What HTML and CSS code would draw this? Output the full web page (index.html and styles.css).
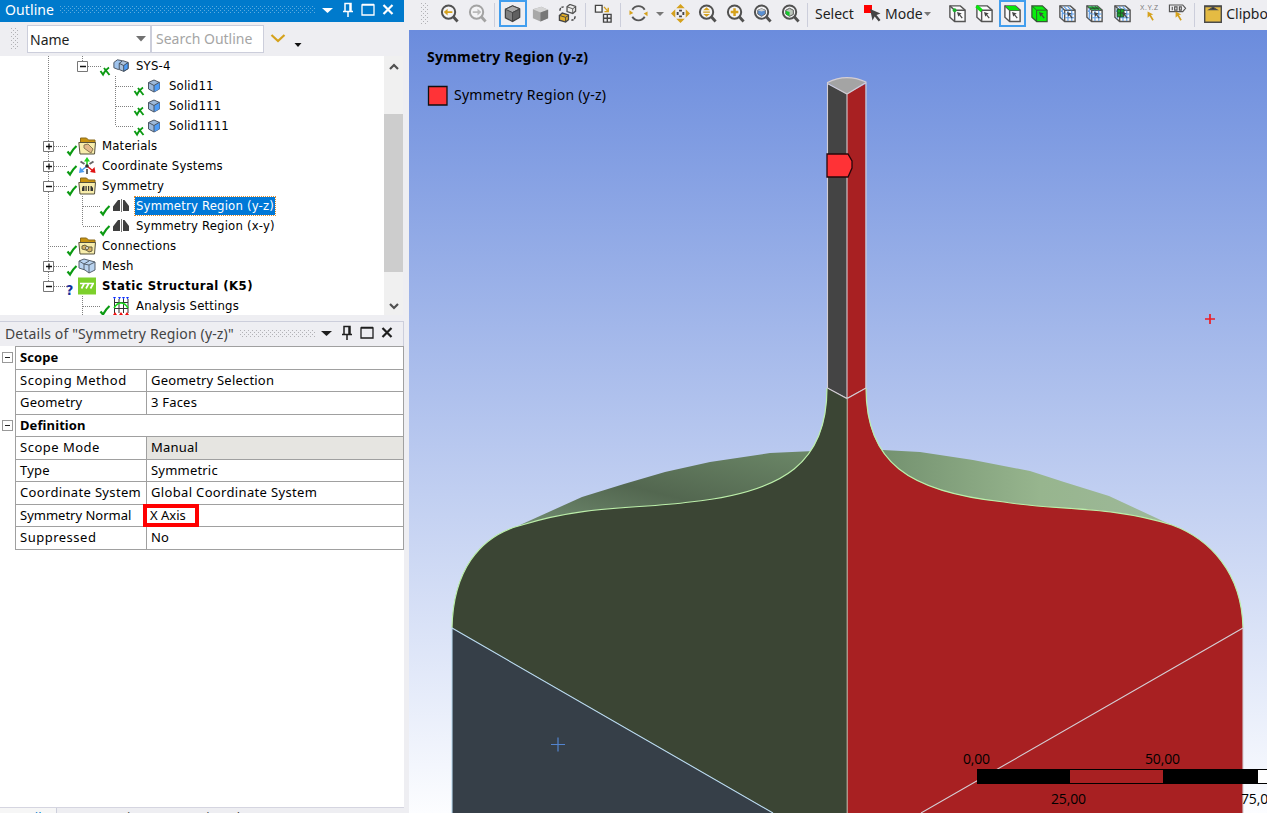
FILE: index.html
```html
<!DOCTYPE html>
<html lang="en">
<head>
<meta charset="utf-8">
<title>Outline</title>
<link rel="stylesheet" href="styles.css">
</head>
<body>
<svg class="defs" width="0" height="0">
  <defs>
    <pattern id="grip" width="4" height="4" patternUnits="userSpaceOnUse"><path d="M0 0h1v1H0zM2 2h1v1H2z" fill="#b2b2b6"/></pattern>
    <pattern id="grip-active" width="4" height="4" patternUnits="userSpaceOnUse"><path d="M0 0h1v1H0zM2 2h1v1H2z" fill="#5cabdf"/></pattern>
    <symbol id="check" viewBox="0 0 12 14"><path d="M1.500 8.500L4 11.500Q6.500 6.500 10.500 3" fill="none" stroke="#0b9a12" stroke-width="2.200"/></symbol>
    <symbol id="checkx" viewBox="0 0 12 14"><path d="M1.500 8L4 11.500Q6 7 10 4.500M5 5l5.500 7" fill="none" stroke="#0b9a12" stroke-width="1.900"/></symbol>
    <symbol id="cube" viewBox="0 0 14 16"><path d="M1.500 4.500L7 2l5.500 2.500v6.500L7 14l-5.500-3z" fill="#9db9da" stroke="#4a5564"/><path d="M7 7.500l5.500-3v6.500L7 14z" fill="#4f9cf5"/><path d="M1.500 4.500L7 7.500l5.500-3.300M7 7.500v6.500" fill="none" stroke="#4a5564"/></symbol>
    <symbol id="folder" viewBox="0 0 18 18"><path d="M2.500 6V1h6l2 2h6.500V6" fill="#c9930e" stroke="#8a6a1c"/><path d="M.8 5.500h16.700L16.500 17h-14.500z" fill="#f8edab" stroke="#57523c"/></symbol>
    <symbol id="mirror" viewBox="0 0 18 16"><path d="M1 13V8.500l5-6.500H8v11zM11 13V2h1.500l4.500 6v5z" fill="#3f3f3f"/><path d="M9.500 1v13" stroke="#777" stroke-width="1"/></symbol>
    <symbol id="lens" viewBox="0 0 20 20"><circle cx="9" cy="8.500" r="7" fill="#f4f4f6" stroke="currentColor" stroke-width="2.100"/><path d="M14 13.500l4.500 5" stroke="currentColor" stroke-width="3"/></symbol>
    <symbol id="box" viewBox="0 0 20 20"><path d="M2 2h11l5 4.500v12H7L2 14z" fill="#fbfbfc" stroke="#555" stroke-width="1.500"/><path d="M2 2L7 6.500h11M7 6.500v12" fill="none" stroke="#555" stroke-width="1.500"/></symbol>
    <symbol id="arrow" viewBox="0 0 20 20"><path d="M9.500 8.500l5 1.500-1.800 1 2.800 3.500-1 .8-2.700-3.500-1 1.700z" fill="#444"/></symbol>
    <symbol id="meshbox" viewBox="0 0 20 20"><use href="#box"/><path d="M10.500 7v11M14.500 7v11M7.500 10.500h10M7.500 14.500h10M6 2.500l4 4M10 2.500l4 4M3 7l4 4M4.500 4.500v11" stroke="#5a9be6" stroke-width="1.200"/></symbol>
  </defs>
</svg>
<div class="app">
  <aside class="left">
    <header class="title title-active">
      <span class="title-text">Outline</span>
      <svg class="title-grip" height="7"><rect width="100%" height="7" fill="url(#grip-active)"/></svg>
      <svg class="title-actions" width="78" height="18" viewBox="0 0 78 18"><path d="M3 7h11L8.500 12z" fill="currentColor"/><path d="M26 2.500h6v8h-6zM24 10.500h10M29 11v5M31 3v7" fill="none" stroke="currentColor" stroke-width="1.500"/><path d="M43 4h12v10H43zM43 3.500h12" fill="none" stroke="currentColor" stroke-width="1.300"/><path d="M64.500 4l9 9M73.500 4l-9 9" stroke="currentColor" stroke-width="2.200"/></svg>
    </header>
    <div class="filterbar">
      <svg class="filter-grip" width="7" height="22"><rect width="7" height="22" fill="url(#grip)"/></svg>
      <div class="select"><span>Name</span><svg width="10" height="6"><path d="M0 0h10L5 5.500z" fill="#717171"/></svg></div>
      <div class="search">Search Outline</div>
      <svg class="filter-more" width="34" height="20"><path d="M1.500 3l6.500 6 6.500-6" fill="none" stroke="#d5a21c" stroke-width="2.200"/><path d="M24.500 11h7L28 15z" fill="#111"/></svg>
    </div>
    <div class="treewrap">
      <div class="tree">
        <svg class="guides" width="140" height="259" viewBox="0 56 140 259">
          <g fill="none" stroke="#808080" stroke-dasharray="1 1"><path d="M48.500 56v230M82.500 56v6M54 146.500h13M54 166.500h13M54 186.500h13M48 246.500h19M54 266.500h13M54 286.500h13M88 66.500h13M115.500 76v50M116 86.500h18M116 106.500h18M116 126.500h18M82.500 196v30M83 206.500h17M83 226.500h17M82.500 296v19M83 306.500h17"/></g>
          <g fill="#fff" stroke="#777"><path d="M77.500 61.500h10v10h-10zM43.500 141.500h10v10h-10zM43.500 161.500h10v10h-10zM43.500 181.500h10v10h-10zM43.500 261.500h10v10h-10zM43.500 281.500h10v10h-10z"/></g>
          <path d="M80 66.500h6M46 146.500h6M49 143.500v6M46 166.500h6M49 163.500v6M46 186.500h6M46 266.500h6M49 263.500v6M46 286.500h6" stroke="#111" stroke-width="1.300"/>
        </svg>
        <div class="row l2"><svg class="st"><use href="#checkx"/></svg><svg class="ic" viewBox="0 0 18 18"><g stroke="#3c4654"><path d="M1 5l4-3 5 1v7l-4 3-5-2z" fill="#9fc3ec"/><path d="M7 6l4-3 6 2v7l-5 3-5-2z" fill="#a9c0da"/><path d="M12 8.500l5-3.500v7l-5 3z" fill="#4f9cf5"/><path d="M7 6l5 2.500" /></g></svg><span class="sys">SYS-4</span></div>
        <div class="row l3"><svg class="st"><use href="#checkx"/></svg><svg class="ic cube"><use href="#cube"/></svg><span>Solid11</span></div>
        <div class="row l3"><svg class="st"><use href="#checkx"/></svg><svg class="ic cube"><use href="#cube"/></svg><span>Solid111</span></div>
        <div class="row l3"><svg class="st"><use href="#checkx"/></svg><svg class="ic cube"><use href="#cube"/></svg><span>Solid1111</span></div>
        <div class="row l1"><svg class="st"><use href="#check"/></svg><svg class="ic" viewBox="0 0 18 18"><use href="#folder"/><path d="M6 8l4-1 5 5-2 4-3-2-4-3z" fill="#e2b98a" stroke="#8a7850"/></svg><span>Materials</span></div>
        <div class="row l1"><svg class="st"><use href="#check"/></svg><svg class="ic" viewBox="0 0 18 18"><path d="M9 9V2" stroke="#22d422" stroke-width="1.500"/><path d="M9 9l-6 5" stroke="#4b9cf0" stroke-width="1.500"/><path d="M9 9l6 5" stroke="#e01414" stroke-width="1.500"/><path d="M9 0l3 4.500H6z" fill="#22d422"/><path d="M1 16l1-6 4.500 5z" fill="#4b9cf0"/><path d="M17.500 16l-1-6-4.500 5z" fill="#e01414"/><path d="M2.500 4.500l4 2.500M15.500 4.500l-4 2.500M9 12v5" stroke="#666" stroke-width="2"/><circle cx="9" cy="9" r="1.800" fill="#333"/></svg><span>Coordinate Systems</span></div>
        <div class="row l1"><svg class="st"><use href="#check"/></svg><svg class="ic" viewBox="0 0 18 18"><use href="#folder"/><path d="M4 14v-3l1-2h1.500v5zM7.500 9h1.200v5H7.500zM10 14V9h1.200v5zM12.500 14V9h1l1.500 2v3z" fill="#333"/></svg><span>Symmetry</span></div>
        <div class="row l2"><svg class="st"><use href="#check"/></svg><svg class="ic"><use href="#mirror"/></svg><span class="selected">Symmetry Region (y-z)</span></div>
        <div class="row l2"><svg class="st"><use href="#check"/></svg><svg class="ic"><use href="#mirror"/></svg><span>Symmetry Region (x-y)</span></div>
        <div class="row l1"><svg class="st"><use href="#check"/></svg><svg class="ic" viewBox="0 0 18 18"><use href="#folder"/><path d="M4 9l3-1 3 2 4 0v4l-3 1-3-2-4-1z" fill="#d6b262" stroke="#665f42"/><circle cx="9" cy="11" r="1.500" fill="#fff" stroke="#665f42"/></svg><span>Connections</span></div>
        <div class="row l1"><svg class="st"><use href="#check"/></svg><svg class="ic" viewBox="0 0 18 18"><path d="M1 4l5-2 11 3v8l-6 3-4-3-6-2z" fill="#b9d3f0" stroke="#56616e"/><path d="M1 4l5 3 5 1 6-3M11 8v8M6 7v6M6 7l5-3" fill="none" stroke="#56616e"/></svg><span>Mesh</span></div>
        <div class="row l1"><b class="question">?</b><svg class="ic" viewBox="0 0 18 18"><path d="M0 .5h18v17H0z" fill="#7dd02c"/><path d="M2 6.500h14M6 7l-2.500 4.500M10.500 7L8 11.500M15 7l-2.500 4.500" stroke="#fff" stroke-width="1.700"/></svg><span class="strong">Static Structural (K5)</span></div>
        <div class="row l2"><svg class="st"><use href="#check"/></svg><svg class="ic tall" viewBox="0 0 18 18"><path d="M2.500 2v14M7 2v14M11.500 2v14M16 2v14M2 5.500h14M2 11.500h14" stroke="#333"/><path d="M1 0h3L2.500 2.500zM6 0h3L7.500 2.500zM10 0h3l-1.500 2.500zM14 0h3l-1.500 2.500z" fill="#13f"/><path d="M2 11q3-5 7-5t7 5" fill="none" stroke="#1bd91b" stroke-width="1.600"/><path d="M1 18l2-3 2 3zM7 18l2-3 2 3zM13 18l2-3 2 3z" fill="#e11"/></svg><span>Analysis Settings</span></div>
      </div>
      <div class="scroll"><svg width="10" height="8"><path d="M1 6l4-4 4 4" fill="none" stroke="#505050" stroke-width="2.200"/></svg><div class="thumb"></div><svg width="10" height="8"><path d="M1 2l4 4 4-4" fill="none" stroke="#505050" stroke-width="2.200"/></svg></div>
    </div>
    <header class="title title-details">
      <span class="title-text">Details of "Symmetry Region (y-z)"</span>
      <svg class="title-grip" height="7"><rect width="100%" height="7" fill="url(#grip)"/></svg>
      <svg class="title-actions" width="78" height="18" viewBox="0 0 78 18"><path d="M3 7h11L8.500 12z" fill="currentColor"/><path d="M26 2.500h6v8h-6zM24 10.500h10M29 11v5M31 3v7" fill="none" stroke="currentColor" stroke-width="1.500"/><path d="M43 4h12v10H43zM43 3.500h12" fill="none" stroke="currentColor" stroke-width="1.300"/><path d="M64.500 4l9 9M73.500 4l-9 9" stroke="currentColor" stroke-width="2.200"/></svg>
    </header>
    <section class="details">
      <div class="gutter"><i class="minus"></i><i class="minus"></i></div>
      <div class="props">
        <div class="prop group">Scope</div>
        <div class="prop"><span class="wide">Scoping Method</span><span>Geometry Selection</span></div>
        <div class="prop"><span>Geometry</span><span>3 Faces</span></div>
        <div class="prop group">Definition</div>
        <div class="prop"><span class="wide">Scope Mode</span><span class="readonly">Manual</span></div>
        <div class="prop"><span>Type</span><span>Symmetric</span></div>
        <div class="prop"><span class="medium">Coordinate System</span><span class="medium">Global Coordinate System</span></div>
        <div class="prop"><span class="narrow">Symmetry Normal</span><span class="marked">X Axis</span></div>
        <div class="prop"><span class="wide">Suppressed</span><span>No</span></div>
      </div>
    </section>
    <nav class="tabs"><span class="tab current">Details</span><span class="tab">Manage Views</span><span class="tab">Section Planes</span></nav>
  </aside>
  <main class="right">
    <div class="toolbar">
      <svg class="bar-grip" width="7" height="22"><rect width="7" height="22" fill="url(#grip)"/></svg>
      <div class="group-tools">
        <span class="tool"><svg viewBox="0 0 20 20"><use href="#lens"/><path d="M4 8.500l4-3.500v2.500h5v2H8V12z" fill="#d5a11d"/></svg></span>
        <span class="tool dim"><svg viewBox="0 0 20 20"><use href="#lens"/><path d="M14 8.500l-4-3.500v2.500H5v2h5V12z" fill="#bbb"/></svg></span>
      </div><i class="sep"></i>
      <div class="group-tools">
        <span class="tool on"><svg viewBox="0 0 20 20"><path d="M2.500 5.500L10 2l7.500 3v9L10 18.500l-7.500-4z" fill="#808080" stroke="#444" stroke-width="1.300"/><path d="M2.500 5.500L10 2l7.500 3-7.500 4z" fill="#aaa" stroke="#444"/><path d="M10 9v9l7.500-4V5.500z" fill="#606060" stroke="#444"/></svg></span>
        <span class="tool"><svg viewBox="0 0 20 20"><path d="M2 5.500L11 3l7 3v9l-8 3.500L2 15z" fill="#a8a8a8"/><path d="M2 5.500L11 3l7 3-8 3z" fill="#d4d4d4"/><path d="M10 9l8-3v9l-8 3.500z" fill="#777"/></svg></span>
        <span class="tool"><svg viewBox="0 0 20 20"><path d="M9.500 3l3-2.500 6 2v5l-3 2.500-6-2z" fill="#eee" stroke="#555" stroke-width="1.400"/><path d="M9.500 3l6 2 3-2M15.500 5v5" stroke="#555" fill="none"/><path d="M1.500 12L4.500 9.500l6.500 2v5l-3 2.500-6.500-2z" fill="#e2ae28" stroke="#444" stroke-width="1.400"/><path d="M1.500 12l6.500 2 3-2M8 14v5" stroke="#444" fill="none"/><path d="M2 7q0-4 4-4M18 13q0 4-4 4" fill="none" stroke="#444" stroke-width="1.500" stroke-dasharray="3 1"/></svg></span>
      </div><i class="sep"></i>
      <div class="group-tools"><span class="tool"><svg viewBox="0 0 20 20"><path d="M1.500 1.500h7v7h-7z" fill="#f8f8f8" stroke="#444" stroke-width="1.400"/><path d="M10 11h8v8h-8zM14 11v8M10 15h8" fill="none" stroke="#444" stroke-width="1.400"/><path d="M10.500 3l4 4.500M15 4v4h-4" fill="none" stroke="#d5a11d" stroke-width="1.500"/></svg></span></div><i class="sep"></i>
      <div class="group-tools">
        <span class="tool"><svg viewBox="0 0 20 20"><path d="M3.500 6A7.500 7.500 0 0 1 16.500 6M16.500 13.500A7.500 7.500 0 0 1 3.500 13.500" fill="none" stroke="#555" stroke-width="2"/><path d="M.5 6.500v5l4-2zM19.500 13V8l-4 2z" fill="#d5a11d"/></svg></span>
        <svg class="caret" width="14" height="6"><path d="M3 1h8L7 5z" fill="#777"/></svg>
        <span class="tool"><svg viewBox="0 0 20 20"><path d="M10 0l4.500 4.500h-9zM10 20l4.500-4.500h-9zM0 10l4.500-4.500v9zM20 10l-4.500-4.500v9z" fill="#d5a11d"/><path d="M8.500 7h3M8.500 13h3M7 8.500v3M13 8.500v3" stroke="#444" stroke-width="2"/></svg></span>
        <span class="tool"><svg viewBox="0 0 20 20"><use href="#lens"/><path d="M9 3.500l3.500 3h-7zM9 13.500l3.500-3h-7zM5.500 8h7v1.300h-7z" fill="#d5a11d"/></svg></span>
        <span class="tool"><svg viewBox="0 0 20 20"><use href="#lens"/><path d="M9 4.500v8M5 8.500h8" stroke="#d5a11d" stroke-width="2.600"/></svg></span>
        <span class="tool"><svg viewBox="0 0 20 20"><use href="#lens"/><path d="M5 6.500L9 5l4 1.500v4L9 13l-4-2.500z" fill="#5b90d2" stroke="#666"/><path d="M5 6.500L9 5l4 1.500-4 1.500z" fill="#ccc"/></svg></span>
        <span class="tool"><svg viewBox="0 0 20 20"><use href="#lens"/><path d="M5 6.500L9 4.500l4 2v4.500L9 13l-4-2.500z" fill="#bcc6bc" stroke="#555"/><path d="M5 7l4 1.500V13l-4-2.500z" fill="#16c72c"/></svg></span>
      </div><i class="sep"></i>
      <span class="label select-label">Select</span>
      <svg class="mode-icon" width="18" height="18"><path d="M0 0h8v8H0z" fill="red"/><path d="M6 4l10.500 4.500-4 1.500 4 5-1.800 1.500-4-5-2.200 4z" fill="#444"/></svg>
      <span class="label">Mode</span>
      <svg class="caret mode-caret" width="9" height="6"><path d="M1 1h7L4.500 5z" fill="#777"/></svg>
      <div class="group-tools pickers">
        <span class="tool"><svg viewBox="0 0 20 20"><use href="#box"/><use href="#arrow"/><circle cx="7" cy="6.500" r="2" fill="#19b32a"/></svg></span>
        <span class="tool"><svg viewBox="0 0 20 20"><use href="#box"/><path d="M1.500 2l5.500 5" stroke="#08e60d" stroke-width="3.500"/><use href="#arrow"/></svg></span>
        <span class="tool on"><svg viewBox="0 0 20 20"><use href="#box"/><path d="M2.500 2.200H13L17.500 6.500H7z" fill="#08e60d"/><use href="#arrow"/></svg></span>
        <span class="tool"><svg viewBox="0 0 20 20"><path d="M2 2h11l5 4.500v12H7L2 14z" fill="#08f00d" stroke="#355835" stroke-width="1.300"/><path d="M2 2l5 4.500h11M7 6.500v12" fill="none" stroke="#355835"/><use href="#arrow"/></svg></span>
        <span class="tool"><svg viewBox="0 0 20 20"><use href="#meshbox"/><use href="#arrow"/></svg></span>
        <span class="tool"><svg viewBox="0 0 20 20"><use href="#meshbox"/><path d="M3 2.500h10l4 3.500H7z" fill="#16b72c"/><path d="M7 2.500l4 3.500M10.500 2.500l4 3.500M5 4.500h10" stroke="#333" stroke-width=".8"/><use href="#arrow"/></svg></span>
        <span class="tool"><svg viewBox="0 0 20 20"><use href="#meshbox"/><path d="M4.500 5.500h7v8h-7z" fill="#19a22b" stroke="#234f28"/><path d="M5 9.500h7M8 6v8" stroke="#234f28"/><use href="#arrow"/></svg></span>
        <span class="tool"><svg viewBox="0 0 20 20"><text x="0" y="6" font-size="7" textLength="19" class="xyz">X.Y.Z</text><path d="M8 8l6 3-2.500.5 3 5-1.500 1-3-5-2 2z" fill="#d5a11d"/></svg></span>
        <span class="tool"><svg viewBox="0 0 20 20"><path d="M1.500 1h14l3 3.500-3 3.500H1.500zM4.500 3v3.500M7 3h2.500v3.500H7zM12 3h2v3.500h-2z" fill="none" stroke="#555" stroke-width="1.200"/><path d="M8 8l6 3-2.500.5 3 5-1.500 1-3-5-2 2z" fill="#d5a11d"/></svg></span>
      </div><i class="sep"></i>
      <svg class="clip-icon" width="18" height="18"><path d="M.7 1h16.600v16.300H.7z" fill="#e5bb43" stroke="#4b4b4b" stroke-width="1.400"/><path d="M1 1.500h16M5.500 4.500L9 2.500l3.500 2z" stroke="#4b4b4b" stroke-width="1.300"/></svg>
      <span class="label">Clipboard</span>
    </div>
    <svg class="scene" width="858" height="783" viewBox="409 30 858 783">
      <defs>
        <linearGradient id="sky" x1="0" y1="0" x2="0" y2="1"><stop offset="0" stop-color="#6b8cdd"/><stop offset="1" stop-color="#fcfdff"/></linearGradient>
        <linearGradient id="backL" x1="0" y1="1" x2="1" y2="0"><stop offset="0" stop-color="#718c71"/><stop offset=".45" stop-color="#536750"/><stop offset="1" stop-color="#6c8868"/></linearGradient>
        <linearGradient id="backR" x1="0" y1="0" x2="1" y2="0"><stop offset="0" stop-color="#718f6d"/><stop offset=".55" stop-color="#97b58e"/><stop offset="1" stop-color="#9fb99b"/></linearGradient>
      </defs>
      <path d="M409 30h858v783H409z" fill="url(#sky)"/>
      <path d="M520 525L582 497 624 484 665 472 710 462 770 453 814 451V500L640 516z" fill="url(#backL)"/>
      <path d="M883 450L920 452 973 460 1030 471 1064 482 1109 496 1180 529 1060 518 900 510 870 450z" fill="url(#backR)"/>
      <path d="M452 628L773 813H452z" fill="#363f48"/>
      <path d="M827 388L847 398V813H773L452 628C453 573 478 536 522 525C585 505 638 509 690 502C785 492 827 462 827 388z" fill="#3b4534"/>
      <path d="M866 388L847 398V813H1243V628C1242 573 1210 539 1172 525C1109 505 1056 511 1004 502C908 492 866 462 866 388z" fill="#a82022"/>
      <path d="M827 388C827 462 785 492 690 502C638 509 585 505 522 525C478 536 453 573 452 628M866 388C866 462 908 492 1004 502C1056 511 1109 505 1172 525C1210 539 1242 573 1243 628" fill="none" stroke="#bcefaa" stroke-width="1.200"/>
      <path d="M827.500 84L847 94V398L827.500 388z" fill="#444"/>
      <path d="M847 94L865.500 84V388L847 398z" fill="#a82022"/>
      <path d="M827.500 82.500Q846 73 866 82L847 94z" fill="#a4a4a4"/>
      <g fill="none" stroke="#d4ced4" stroke-width="1.100"><path d="M827.500 388V82.500Q846 73 866 82V388M827.500 83.500L847 94 866 82.500M847 94V398M827.500 388L847 398.500 866 388"/><path d="M847.200 398V813" stroke="#b9b8aa"/><path d="M452 813V628L773 813" stroke="#b9d9ef"/><path d="M1243 813V628L921 813"/></g>
      <path d="M827 154h21l4 7v7l-4 9h-21z" fill="#ff3236" stroke="#25070a" stroke-width="1.300"/>
      <path d="M428.500 86.500h18.500v18.500h-18.500z" fill="#ff3337" stroke="#111" stroke-width="1.300"/>
      <path d="M551 744.500h14M558 737.500v14" stroke="#5384cf" stroke-width="1.200"/>
      <path d="M1205 319h10M1210 314v10" stroke="#ee1c24" stroke-width="1.700"/>
      <path d="M977 769h290v15H977z" fill="#000"/><path d="M1070 770h93v13h-93z" fill="#a82022"/><path d="M1258 770h9v13h-9z" fill="#fff"/>
      <text x="427" y="62" textLength="161" class="legend-title">Symmetry Region (y-z)</text>
      <text x="454" y="100" textLength="152" class="legend">Symmetry Region (y-z)</text>
      <g class="scale"><text x="963" y="764" textLength="27">0,00</text><text x="1145" y="764" textLength="35">50,00</text><text x="1051" y="804" textLength="35">25,00</text><text x="1241" y="804" textLength="35">75,00</text></g>
    </svg>
  </main>
</div>
</body>
</html>
```
FILE: styles.css
```css
* { box-sizing: border-box; }
body { margin: 0; overflow: hidden; background: #eeeef2; font-family: "Noto Sans", "Open Sans", sans-serif; color: #1e1e1e; }
svg { display: block; flex: none; }
.defs { position: absolute; }
.app { display: grid; grid-template-columns: 409px 858px; width: 1267px; height: 813px; }
.left { display: flex; flex-direction: column; width: 404px; height: 813px; overflow: hidden; }
.title { display: flex; align-items: center; padding: 0 7px 0 5px; font-size: 14px; white-space: nowrap; }
.title-active { height: 22px; flex: none; background: #007acc; color: #fff; padding-bottom: 3px; }
.title-active .title-text { letter-spacing: .1px; }
.title-grip { flex: 1; width: 0; margin: 0 3px 0 6px; }
.title-details { height: 25px; flex: none; margin-top: 6px; padding-bottom: 2px; border: 1px solid #cccedb; border-width: 1px 1px 0 0; color: #444; }
.title-details .title-actions { color: #1e1e1e; }
.title-details .title-text { letter-spacing: .15px; }
.filterbar { display: flex; height: 34px; flex: none; padding: 3px 0 0 11px; font-size: 14px; }
.filter-grip { margin: 3px 9px 0 0; }
.select { display: flex; align-items: center; justify-content: space-between; width: 124px; height: 28px; padding: 0 4px 0 2px; border: 1px solid #cccedb; background: #fff; }
.search { width: 113px; height: 28px; padding: 0 5px 0 4px; border: 1px solid #cccedb; background: #fff; color: #a5a5a5; line-height: 26px; white-space: nowrap; }
.filter-more { margin: 7px 0 0 6px; }
.treewrap { display: flex; height: 259px; flex: none; }
.tree { position: relative; width: 384px; height: 259px; overflow: hidden; background: #fff; font: 13px "DejaVu Sans Condensed", "Noto Sans", sans-serif; letter-spacing: .18px; color: #000; }
.guides { position: absolute; left: 0; top: 0; }
.row { display: flex; position: relative; align-items: center; height: 20px; white-space: nowrap; }
.l1 { padding-left: 66px; }
.l2 { padding-left: 99px; }
.l3 { padding-left: 133px; }
.row span { margin-left: 5px; padding: 0 1px; line-height: 18px; }
.st { width: 12px; height: 14px; margin-top: 8px; }
.ic { width: 18px; height: 18px; }
.l2 .ic { height: 16px; margin-left: 1px; }
.l2 .ic.tall { height: 18px; }
.l3 .ic { width: 14px; height: 16px; margin: 0 1px 0 2px; }
.l3 span { margin-left: 6px; }
.row .selected { background: #0078d7; color: #fff; outline: 1px dotted #e08b2d; }
.row .strong { font-weight: bold; letter-spacing: .45px; }
.question { width: 12px; padding-top: 7px; color: #10309a; font-size: 14px; }
.scroll { display: flex; flex-direction: column; align-items: center; justify-content: space-between; width: 19px; padding: 7px 0 5px; background: #f0f0f0; }
.thumb { width: 19px; height: 158px; margin-top: 36px; margin-bottom: 24px; background: #cdcdcd; }
.details { display: flex; flex: 1; background: #fff; min-height: 0; }
.gutter { width: 15px; padding: 6px 0 0 2px; }
.minus { display: flex; align-items: center; width: 11px; height: 11px; margin-bottom: 56.500px; border: 1px solid #999; }
.minus::after { content: ""; width: 5px; height: 1px; margin-left: 2px; background: #222; }
.props { width: 389px; height: 204px; border: 1px solid #a0a0a0; border-bottom: 0; font-size: 13px; letter-spacing: .2px; color: #000; }
.prop { display: grid; grid-template-columns: 130px 1fr; height: 22.500px; border-bottom: 1px solid #a0a0a0; line-height: 20px; white-space: nowrap; }
.prop span { padding-left: 4px; }
.prop .wide { letter-spacing: .5px; }
.prop .medium { letter-spacing: .34px; }
.prop .narrow { letter-spacing: 0; }
.prop span + span { border-left: 1px solid #a0a0a0; }
.prop.group { display: block; padding-left: 4px; font-weight: bold; letter-spacing: .1px; }
.readonly { background: #e6e5e1; }
.prop .marked { width: 56px; height: 23px; margin: -1px 0 0 -3px; padding-left: 3px; border: 4px solid #f00; line-height: 14px; letter-spacing: 0; }
.tabs { display: flex; height: 6px; flex: none; overflow: hidden; border-top: 1px solid #d5d5e0; font-size: 13px; line-height: 18px; color: #444; white-space: nowrap; }
.tab { padding-left: 9px; margin-right: 18px; }
.tab.current { width: 57px; margin: 0; padding-left: 6px; background: #f6f6f6; border-right: 1px solid #cccedb; color: #007acc; }
.right { display: flex; flex-direction: column; min-width: 0; overflow: hidden; }
.toolbar { display: flex; align-items: center; width: 858px; height: 30px; padding: 0 0 3px 12px; overflow: hidden; font-size: 14px; white-space: nowrap; }
.bar-grip { margin-right: 8px; }
.group-tools { display: flex; flex: none; align-items: center; }
.tool { display: flex; flex: none; align-items: center; justify-content: center; width: 27.500px; height: 27px; color: #515151; }
.tool svg { width: 19px; height: 19px; }
.tool.on { border: 2px solid #429eee; }
.tool.dim { color: #a3a3a3; }
.sep { flex: none; width: 1px; height: 24px; margin: 3px 4px 0 3px; background: #cccedb; }
.label { flex: none; }
.select-label { width: 40px; margin-left: 3px; }
.mode-icon { margin: 0 3px 0 9px; }
.mode-caret { margin: 0; }
.pickers { margin-left: 12px; }
.clip-icon { margin: 0 4px 0 5px; }
.xyz { font-family: "Liberation Sans", sans-serif; fill: #777; }
.legend-title { font: bold 14px "Noto Sans", sans-serif; }
.legend { font: 14px "Noto Sans", sans-serif; }
.scale { font: 14px "Open Sans", "Noto Sans", sans-serif; }
```
